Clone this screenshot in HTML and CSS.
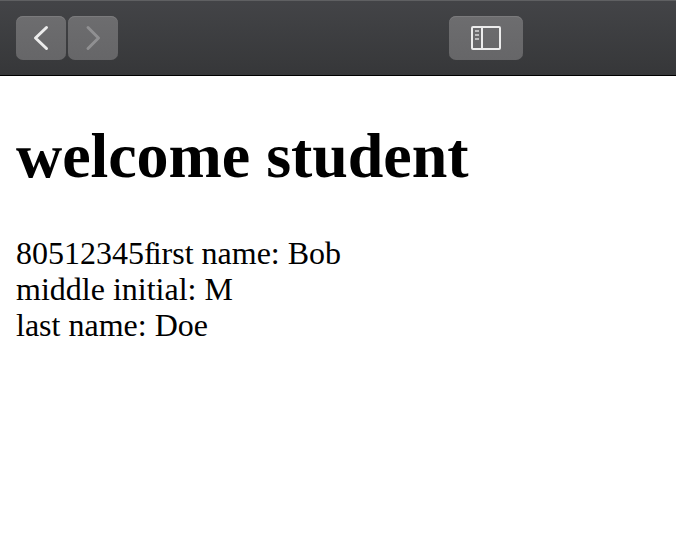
FILE: index.html
```html
<!DOCTYPE html>
<html lang="en">
<head>
<meta charset="utf-8">
<title>welcome student</title>
<link rel="stylesheet" href="styles.css">
</head>
<body>
<header class="toolbar">
  <nav class="history">
    <button class="btn" aria-label="Back"><svg width="50" height="44" viewBox="0 0 50 44"><path class="chevron" d="M30.5 11.5 19.5 22 30.5 32.5"/></svg></button>
    <button class="btn btn-off" aria-label="Forward"><svg width="50" height="44" viewBox="0 0 50 44"><path class="chevron" d="M20 11.5 30.5 22 20 32.5"/></svg></button>
  </nav>
  <button class="btn btn-wide" aria-label="Sidebar"><svg width="74" height="44" viewBox="0 0 74 44"><rect class="panel" x="23" y="11" width="28" height="22" rx="1"/><path class="panel" d="M33 11v22"/><path class="panel marks" d="M26 15h4M26 19h4M26 23h4"/></svg></button>
</header>
<main class="page">
  <h1 class="title">welcome student</h1>
  <p class="details">80512345<span class="tight">f</span>irst name: Bob<br>middle initial: M<br>last name: Doe</p>
</main>
</body>
</html>
```
FILE: styles.css
```css
* { box-sizing: border-box; }
body { margin: 0; background: #fff; color: #000; font-family: "Liberation Serif", serif; overflow: hidden; }
.toolbar { display: flex; height: 76px; padding: 15px 153px 0 16px; justify-content: space-between; align-items: flex-start; background: linear-gradient(#434447, #363739); border-top: 1px solid #5f6062; border-bottom: 1px solid #000; }
.history { display: flex; gap: 2px; }
.btn { display: block; width: 50px; height: 44px; padding: 0; border: 0; border-radius: 7px; background: linear-gradient(#6d6d6f, #666668); box-shadow: inset 0 1px #7b7b7d; color: #ececec; }
.btn svg { display: block; }
.btn-off { color: #909092; }
.btn-wide { width: 74px; }
.chevron { fill: none; stroke: currentColor; stroke-width: 3; stroke-linecap: round; stroke-linejoin: round; }
.panel { fill: none; stroke: currentColor; stroke-width: 2; }
.marks { stroke: #bcbcbd; }
.page { padding: 0 16px; }
.title { margin: 43px 0 0; font-size: 64px; line-height: 74px; letter-spacing: -0.05px; }
.details { margin: 42px 0 0; font-size: 32px; line-height: 36px; }
.tight { letter-spacing: -2px; }
```
